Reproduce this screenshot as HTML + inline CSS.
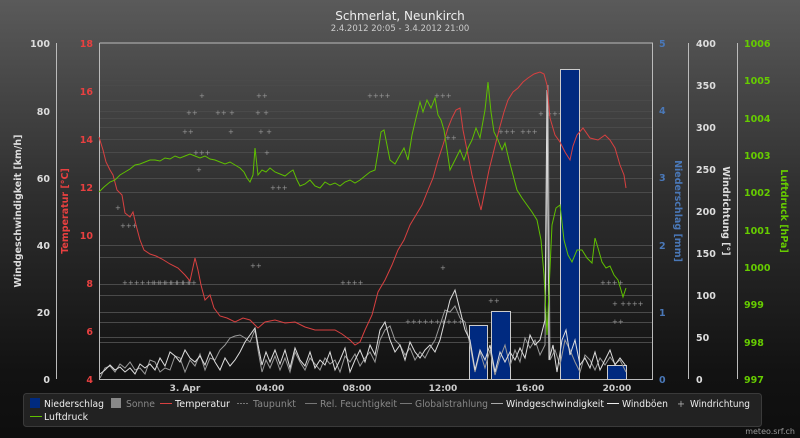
<!DOCTYPE html>
<html><head><meta charset="utf-8"><style>
html,body{margin:0;padding:0;width:800px;height:438px;overflow:hidden;background:#111;font-family:"DejaVu Sans","Liberation Sans",sans-serif}
</style></head><body>
<svg width="800" height="438" viewBox="0 0 800 438" xmlns="http://www.w3.org/2000/svg">
<defs><linearGradient id="bg" x1="0" y1="0" x2="0" y2="1">
<stop offset="0" stop-color="#5a5a5a"/><stop offset="0.45" stop-color="#2e2e2e"/><stop offset="0.85" stop-color="#121212"/><stop offset="1" stop-color="#0e0e0e"/></linearGradient></defs>
<rect width="800" height="438" fill="url(#bg)"/>
<text x="400" y="20" fill="#eee" font-size="12" text-anchor="middle">Schmerlat, Neunkirch</text>
<text x="400" y="31" fill="#ccc" font-size="8.5" text-anchor="middle">2.4.2012 20:05 - 3.4.2012 21:00</text>
<g stroke="#4a4a4a" stroke-width="1">
<line x1="99" x2="652" y1="80.5" y2="80.5"/><line x1="99" x2="652" y1="85.5" y2="85.5"/><line x1="99" x2="652" y1="100.5" y2="100.5"/><line x1="99" x2="652" y1="111.5" y2="111.5"/><line x1="99" x2="652" y1="118.5" y2="118.5"/><line x1="99" x2="652" y1="127.5" y2="127.5"/><line x1="99" x2="652" y1="139.5" y2="139.5"/><line x1="99" x2="652" y1="152.5" y2="152.5"/><line x1="99" x2="652" y1="165.5" y2="165.5"/><line x1="99" x2="652" y1="178.5" y2="178.5"/><line x1="99" x2="652" y1="192.5" y2="192.5"/><line x1="99" x2="652" y1="215.5" y2="215.5"/><line x1="99" x2="652" y1="245.5" y2="245.5"/><line x1="99" x2="652" y1="257.5" y2="257.5"/><line x1="99" x2="652" y1="284.5" y2="284.5"/><line x1="99" x2="652" y1="295.5" y2="295.5"/><line x1="99" x2="652" y1="312.5" y2="312.5"/><line x1="99" x2="652" y1="322.5" y2="322.5"/><line x1="99" x2="652" y1="337.5" y2="337.5"/><line x1="99" x2="652" y1="342.5" y2="342.5"/>
</g>
<g stroke="#bbb" stroke-width="1" fill="none">
<path d="M99.5 43V379.5H652.5V43H99.5"/>
<line x1="56.5" y1="43" x2="56.5" y2="379"/>
<line x1="688.5" y1="43" x2="688.5" y2="379"/>
<line x1="737.5" y1="43" x2="737.5" y2="379"/>
</g>
<g font-size="9.5" font-weight="bold">
<g fill="#ddd" text-anchor="end"><text x="50" y="47">100</text><text x="50" y="115">80</text><text x="50" y="182">60</text><text x="50" y="249">40</text><text x="50" y="316">20</text><text x="50" y="383">0</text></g>
<g fill="#e84040" text-anchor="end"><text x="93" y="47">18</text><text x="93" y="95">16</text><text x="93" y="143">14</text><text x="93" y="191">12</text><text x="93" y="239">10</text><text x="93" y="287">8</text><text x="93" y="335">6</text><text x="93" y="383">4</text></g>
<g fill="#4a78b8"><text x="659" y="47">5</text><text x="659" y="114">4</text><text x="659" y="181">3</text><text x="659" y="249">2</text><text x="659" y="316">1</text><text x="659" y="383">0</text></g>
<g fill="#ddd"><text x="696" y="47">400</text><text x="696" y="89">350</text><text x="696" y="131">300</text><text x="696" y="173">250</text><text x="696" y="215">200</text><text x="696" y="257">150</text><text x="696" y="299">100</text><text x="696" y="341">50</text><text x="696" y="383">0</text></g>
<g fill="#66cc00"><text x="744" y="47">1006</text><text x="744" y="84">1005</text><text x="744" y="122">1004</text><text x="744" y="159">1003</text><text x="744" y="196">1002</text><text x="744" y="234">1001</text><text x="744" y="271">1000</text><text x="744" y="308">999</text><text x="744" y="346">998</text><text x="744" y="383">997</text></g>
<g fill="#ccc" text-anchor="middle" font-size="9"><text x="185" y="391">3. Apr</text><text x="270" y="391">04:00</text><text x="357" y="391">08:00</text><text x="443" y="391">12:00</text><text x="530" y="391">16:00</text><text x="617" y="391">20:00</text></g>
<text transform="translate(21 211) rotate(-90)" fill="#ddd" text-anchor="middle">Windgeschwindigkeit [km/h]</text>
<text transform="translate(68 211) rotate(-90)" fill="#e84040" text-anchor="middle">Temperatur [°C]</text>
<text transform="translate(675 211) rotate(90)" fill="#4a78b8" text-anchor="middle">Niederschlag [mm]</text>
<text transform="translate(723 211) rotate(90)" fill="#ddd" text-anchor="middle">Windrichtung [°]</text>
<text transform="translate(781 211) rotate(90)" fill="#66cc00" text-anchor="middle">Luftdruck [hPa]</text>
</g>
<g fill="#999" font-size="7">
<text x="182" y="134">++</text><text x="186" y="115">++</text><text x="199" y="98">+</text><text x="215" y="115">++ +</text><text x="228" y="134">+</text><text x="193" y="155">+++</text><text x="196" y="172">+</text><text x="256" y="98">++</text><text x="258" y="134">+ +</text><text x="255" y="115">+ +</text><text x="264" y="155">+</text><text x="270" y="190">+++</text><text x="120" y="228">+++</text><text x="122" y="285">++++++++++++</text><text x="150" y="285">++++++++</text><text x="250" y="268">++</text><text x="340" y="285">++++</text><text x="367" y="98">++++</text><text x="405" y="324">++++++++++</text><text x="434" y="98">+++</text><text x="445" y="140">++</text><text x="488" y="303">++</text><text x="498" y="134">+++</text><text x="520" y="134">+++</text><text x="538" y="116">+ +++</text><text x="565" y="267">++</text><text x="600" y="285">++++</text><text x="612" y="306">+ ++++</text><text x="612" y="324">++</text><text x="440" y="270">+</text><text x="115" y="210">+</text>
</g>
<g fill="#002a80" stroke="#ccc" stroke-width="1">
<rect x="469.5" y="325.5" width="18" height="54"/>
<rect x="491.5" y="311.5" width="19" height="68"/>
<rect x="560.5" y="69.5" width="19" height="310"/>
<rect x="607.5" y="365.5" width="19" height="14"/>
</g>
<polyline fill="none" stroke="#999" stroke-width="1" points="100,378 105,368 110,366 115,372 120,364 125,368 130,362 135,370 140,368 145,374 150,360 155,362 160,372 165,368 170,370 175,356 180,358 185,372 190,360 195,366 200,354 205,370 210,358 215,360 220,350 225,345 230,338 235,336 240,335 245,338 250,342 255,330 258,350 262,372 266,360 270,368 275,356 280,370 285,358 290,372 295,352 300,362 305,370 310,358 315,364 320,370 325,358 330,364 335,360 340,372 345,356 350,362 355,354 360,366 365,358 370,352 375,362 380,340 385,330 390,326 395,340 400,345 405,355 410,348 415,360 420,352 425,358 430,348 435,340 440,325 445,310 450,312 455,306 460,318 465,322 470,345 475,372 480,352 485,368 490,350 495,375 500,358 505,345 510,366 515,350 520,362 525,338 530,348 535,340 540,355 545,345 548,85 550,360 555,350 560,365 565,340 570,350 575,362 580,372 585,355 590,360 595,370 600,358 605,365 610,357 615,364 620,360 626,372"/>
<polyline fill="none" stroke="#ddd" stroke-width="1" points="100,374 105,370 110,365 115,370 120,367 125,372 130,368 135,374 140,364 145,368 150,364 155,370 160,358 165,366 170,352 175,356 180,362 185,350 190,358 195,362 200,356 205,365 210,352 215,362 220,370 225,358 230,366 235,360 240,352 245,342 250,335 255,328 258,345 262,365 266,352 270,362 275,350 280,364 285,350 290,368 295,348 300,360 305,366 310,352 315,368 320,360 325,365 330,352 335,370 340,360 345,348 350,372 355,360 360,350 365,362 370,345 375,355 380,330 385,322 390,340 395,352 400,345 405,360 410,342 415,352 420,358 425,350 430,345 435,352 440,340 445,320 450,300 455,290 460,310 465,330 470,340 475,370 480,350 485,360 490,345 495,372 500,352 505,362 510,352 515,360 520,348 525,358 530,335 535,345 540,340 545,320 547,90 549,360 553,345 557,372 562,340 566,330 570,355 575,340 580,365 585,358 590,368 595,352 600,370 605,360 610,350 615,365 620,358 626,366"/>
<polyline fill="none" stroke="#d84040" stroke-width="1" points="99,137 103,150 106,162 110,170 113,175 117,190 122,195 125,213 130,217 133,212 136,225 140,240 144,250 150,254 156,256 162,259 170,264 178,268 185,275 190,281 195,258 198,270 201,285 205,300 210,295 214,308 220,316 227,318 235,322 243,318 250,320 258,328 265,322 275,320 285,323 295,322 305,327 315,330 325,330 335,330 342,334 350,340 355,345 360,342 365,330 372,315 378,292 385,280 392,265 398,250 404,240 410,225 416,215 422,205 428,190 433,178 438,160 443,145 448,128 452,118 456,110 460,108 463,130 467,150 472,175 477,195 481,210 485,190 489,170 494,150 499,130 504,112 508,100 513,92 518,88 523,82 528,78 534,74 540,72 544,74 547,85 550,118 555,135 560,142 565,152 570,160 573,146 577,135 583,128 590,138 598,140 605,135 610,140 615,148 620,165 624,175 626,188"/>
<polyline fill="none" stroke="#5fc000" stroke-width="1" points="99,192 104,187 110,182 115,180 120,175 125,172 130,169 135,165 140,164 145,162 150,160 155,160 160,161 165,158 170,159 175,156 180,158 185,156 190,154 195,156 200,158 205,156 210,159 215,160 220,162 225,164 230,162 235,165 240,168 244,172 247,178 250,182 253,175 255,148 258,175 262,170 266,172 270,168 275,172 280,174 285,176 290,172 293,170 297,180 300,186 305,184 310,180 315,186 320,188 325,182 330,185 335,183 340,186 345,182 350,180 355,183 360,180 365,176 370,172 375,170 378,152 381,132 384,130 387,145 390,160 395,164 400,155 404,148 408,160 412,135 416,118 420,102 423,112 427,100 431,108 435,98 438,115 441,120 444,130 447,150 450,170 455,160 460,150 464,160 468,148 472,140 476,128 480,138 485,110 488,82 491,112 494,132 498,140 502,150 505,143 509,160 513,175 517,190 522,198 527,205 532,212 537,220 541,240 544,275 547,335 549,290 552,225 556,208 560,205 564,240 568,255 572,262 577,250 582,250 587,258 592,263 595,238 598,248 602,262 606,268 610,266 614,275 618,280 621,290 623,297 626,288"/>
<rect x="23.5" y="393.5" width="738" height="33" rx="3" fill="#222" stroke="#3a3a3a"/>
<g font-size="9.5" fill="#eee">
<rect x="30" y="398" width="10" height="10" fill="#002a80"/><text x="44" y="407" textLength="60" lengthAdjust="spacingAndGlyphs">Niederschlag</text>
<rect x="111" y="398" width="10" height="10" fill="#888"/><text x="126" y="407" fill="#888" textLength="29" lengthAdjust="spacingAndGlyphs">Sonne</text>
<line x1="160" y1="403.5" x2="172" y2="403.5" stroke="#d84040"/><text x="175" y="407" textLength="55" lengthAdjust="spacingAndGlyphs">Temperatur</text>
<line x1="237" y1="403.5" x2="249" y2="403.5" stroke="#777" stroke-dasharray="2,1"/><text x="253" y="407" fill="#888" textLength="43" lengthAdjust="spacingAndGlyphs">Taupunkt</text>
<line x1="305" y1="403.5" x2="317" y2="403.5" stroke="#777"/><text x="320" y="407" fill="#888" textLength="77" lengthAdjust="spacingAndGlyphs">Rel. Feuchtigkeit</text>
<line x1="400" y1="403.5" x2="412" y2="403.5" stroke="#777"/><text x="415" y="407" fill="#888" textLength="73" lengthAdjust="spacingAndGlyphs">Globalstrahlung</text>
<line x1="491" y1="403.5" x2="503" y2="403.5" stroke="#aaa"/><text x="506" y="407" textLength="98" lengthAdjust="spacingAndGlyphs">Windgeschwindigkeit</text>
<line x1="607" y1="403.5" x2="619" y2="403.5" stroke="#eee"/><text x="622" y="407" textLength="46" lengthAdjust="spacingAndGlyphs">Windböen</text>
<text x="677" y="407" fill="#aaa">+</text><text x="690" y="407" textLength="60" lengthAdjust="spacingAndGlyphs">Windrichtung</text>
<line x1="30" y1="416.5" x2="42" y2="416.5" stroke="#5fc000"/><text x="44" y="420" textLength="44" lengthAdjust="spacingAndGlyphs">Luftdruck</text>
</g>
<text x="795" y="434" fill="#999" font-size="8" text-anchor="end">meteo.srf.ch</text>
</svg>
</body></html>
